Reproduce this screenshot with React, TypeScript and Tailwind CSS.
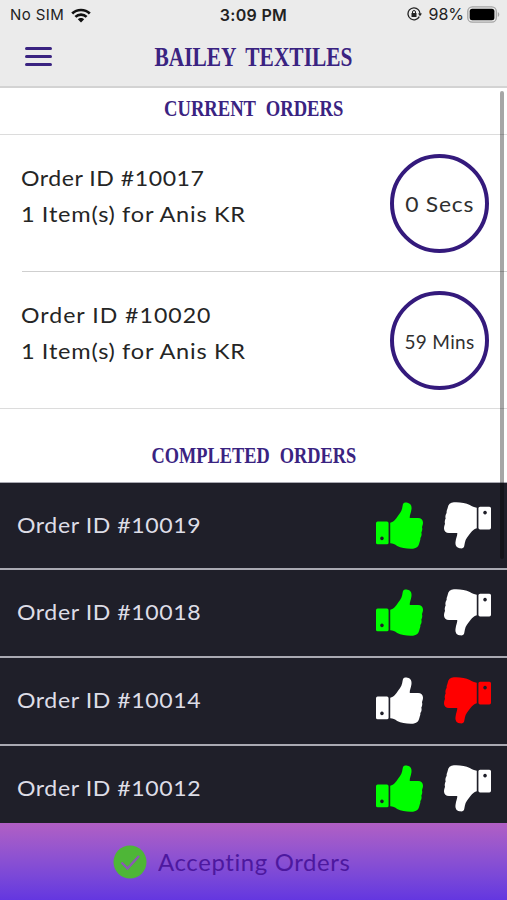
import React from "react";

const display =
  "font-['Liberation_Serif',serif] font-bold whitespace-nowrap text-[#3a2381]";
const body = "font-['Lato',sans-serif] whitespace-nowrap";

function Thumb({ color, down = false }: { color: string; down?: boolean }) {
  return (
    <svg
      viewBox="0 0 142 140"
      className={`h-[47px] w-[47px] ${down ? "rotate-180" : ""}`}
      fill={color}
    >
      <path
        fillRule="evenodd"
        d="M5 58H33Q38 58 38 63V122Q38 127 33 127H5Q0 127 0 122V63Q0 58 5 58ZM18 103.500a5.500 5.500 0 1 0 .01 0Z"
      />
      <path d="M43 62C52 59 57 54 62 47C70 36 77 29 79 18L81 7C83 0 89 0 95 1C105 3 109 11 107 22C106 32 101 40 102 47H127C136 47 142 53 142 61C142 68 140 70 139 75C141 81 139 87 137 91C139 98 137 104 134 108C135 114 132 118 131 123C129 134 123 139 112 140C94 141 77 138 64 132C57 127 51 125 43 124Z" />
    </svg>
  );
}

interface CurrentOrderProps {
  id: string;
  time: string;
  idClass: string;
  timeClass: string;
}

function CurrentOrder({ id, time, idClass, timeClass }: CurrentOrderProps) {
  return (
    <div className="flex h-[137px] justify-between pl-[21px]">
      <div className={`${body} pt-[24px] text-[22px] leading-[37px] text-[#252525]`}>
        <div className={`origin-left scale-x-[1.05] ${idClass}`}>Order ID #{id}</div>
        <div className="-mt-px origin-left scale-x-[1.07] tracking-[0.75px] [word-spacing:-0.4px]">
          1 Item(s) for Anis KR
        </div>
      </div>
      <div className="mt-[19px] mr-[18px] flex size-[99px] items-center justify-center rounded-full border-4 border-[#341a7c]">
        <span className={`${body} text-[#303030] ${timeClass}`}>{time}</span>
      </div>
    </div>
  );
}

function CompletedOrder({ id, liked, className }: { id: string; liked: boolean; className: string }) {
  return (
    <div className={`flex shrink-0 items-start justify-between border-[#a9a9b2] pr-[16px] pl-[17px] ${className}`}>
      <span className={`${body} origin-left scale-x-[1.05] pt-[23px] text-[22px] leading-[37px] tracking-[0.55px] text-[#dddde6]`}>
        Order ID #{id}
      </span>
      <div className="flex gap-[21px] pt-[19px]">
        <Thumb color={liked ? "#00ff00" : "#ffffff"} />
        <Thumb color={liked ? "#ffffff" : "#ff0000"} down />
      </div>
    </div>
  );
}

function StatusBar() {
  return (
    <div className="grid h-[30px] grid-cols-3 items-center px-[10px] font-['Inter',sans-serif] text-[15px] text-[#222]">
      <div className="flex items-center gap-[7px]">
        <span className="tracking-[0.4px]">No SIM</span>
        <svg viewBox="0 0 20 15" className="h-[15px] w-[20px]" fill="none" stroke="#111" strokeWidth="2.7">
          <path d="M1.200 5.500C6 .8 14 .8 18.800 5.500M4.400 8.900C7.500 5.900 12.500 5.900 15.600 8.900" />
          <path d="M10 14.500 6.800 11.300C8.500 9.600 11.500 9.600 13.200 11.300Z" fill="#111" stroke="none" />
        </svg>
      </div>
      <div className="text-center text-[16px] font-semibold tracking-[0.3px] whitespace-nowrap">3:09 PM</div>
      <div className="flex items-center justify-end pb-[2px]">
        <svg viewBox="0 0 15 14" className="mr-[6px] h-[14px] w-[15px]" fill="none" stroke="#222">
          <path d="M11.300 2.600A6 6 0 1 0 12.300 9.600M11.300 2.600A6 6 0 0 1 13 7" strokeWidth="1.300" />
          <path d="M11 6.500h4l-2 2.700Z" fill="#222" stroke="none" />
          <rect x="4.500" y="6" width="5" height="4" fill="#222" stroke="none" />
          <path d="M5.500 6.500V5a1.500 1.500 0 0 1 3 0v1.500" />
        </svg>
        <span className="mr-[3px] text-[16px]">98%</span>
        <svg viewBox="0 0 33 17" className="-mr-[3px] h-[17px] w-[33px]">
          <rect x=".8" y=".8" width="28.500" height="15.400" rx="4.500" fill="none" stroke="#a5a5a5" strokeWidth="1.300" />
          <rect x="2.700" y="2.700" width="24.700" height="11.600" rx="2.500" fill="#000" />
          <path d="M30.800 6v5c2-1 2-4 0-5" fill="#a5a5a5" />
        </svg>
      </div>
    </div>
  );
}

export default function App() {
  return (
    <div className="relative flex h-[900px] w-[507px] flex-col overflow-hidden bg-white">
      <header className="h-[88px] shrink-0 border-b-2 border-[#d3d3d3] bg-[#ebebeb]">
        <StatusBar />
        <div className="grid h-[53px] grid-cols-[76px_1fr_76px] items-center">
          <div className="ml-[25px] flex w-[27px] flex-col gap-[5px]">
            <span className="h-[3px] rounded-full bg-[#3a2381]" />
            <span className="h-[3px] rounded-full bg-[#3a2381]" />
            <span className="h-[3px] rounded-full bg-[#3a2381]" />
          </div>
          <h1 className={`${display} flex justify-center text-[28px]`}>
            <span className="scale-x-[0.765] [word-spacing:6px]">BAILEY TEXTILES</span>
          </h1>
        </div>
      </header>
      <h2 className={`${display} flex h-[47px] shrink-0 items-center justify-center border-b border-[#dcdcdc] pb-[6px] text-[24px]`}>
        <span className="scale-x-[0.775] [word-spacing:7px]">CURRENT ORDERS</span>
      </h2>
      <div className="h-[136px] shrink-0">
        <CurrentOrder
          id="10017"
          time="0 Secs"
          idClass="tracking-[0.5px]"
          timeClass="text-[21px] tracking-[0.7px] scale-x-[1.09]"
        />
      </div>
      <div className="ml-[22px] h-px shrink-0 bg-[#cfcfcf]" />
      <div className="h-[137px] shrink-0 border-b border-[#dcdcdc]">
        <CurrentOrder
          id="10020"
          time="59 Mins"
          idClass="tracking-[0.95px]"
          timeClass="text-[19px] tracking-[0.3px] pt-[3px]"
        />
      </div>
      <h2 className={`${display} flex h-[73px] shrink-0 items-center justify-center pt-[18px] text-[24px]`}>
        <span className="scale-x-[0.765] [word-spacing:7px]">COMPLETED ORDERS</span>
      </h2>
      <section className="flex h-[341px] shrink-0 flex-col overflow-hidden bg-[#1f1f29]">
        <CompletedOrder id="10019" liked className="h-[86px] border-t" />
        <CompletedOrder id="10018" liked className="h-[88px] border-t-2" />
        <CompletedOrder id="10014" liked={false} className="h-[88px] border-t-2" />
        <CompletedOrder id="10012" liked className="h-[88px] border-t-2" />
      </section>
      <footer className="flex h-[77px] shrink-0 items-center bg-linear-to-b from-[#b15fc4] to-[#6436e0] pl-[113px]">
        <div className="flex items-center gap-[11px]">
          <svg viewBox="0 0 34 34" className="size-[34px]">
            <circle cx="17" cy="17" r="16.500" fill="#4eb637" />
            <path d="m8.500 17.500 6 6 11.500-12.500" fill="none" stroke="#8a58b5" strokeWidth="2.400" />
          </svg>
          <span className={`${body} origin-left scale-x-[1.04] pt-px text-[23px] tracking-[0.6px] text-[#4d189f]`}>Accepting Orders</span>
        </div>
      </footer>
      <div className="absolute top-[91px] right-[3px] h-[468px] w-[4px] rounded-full bg-black/35" />
    </div>
  );
}
